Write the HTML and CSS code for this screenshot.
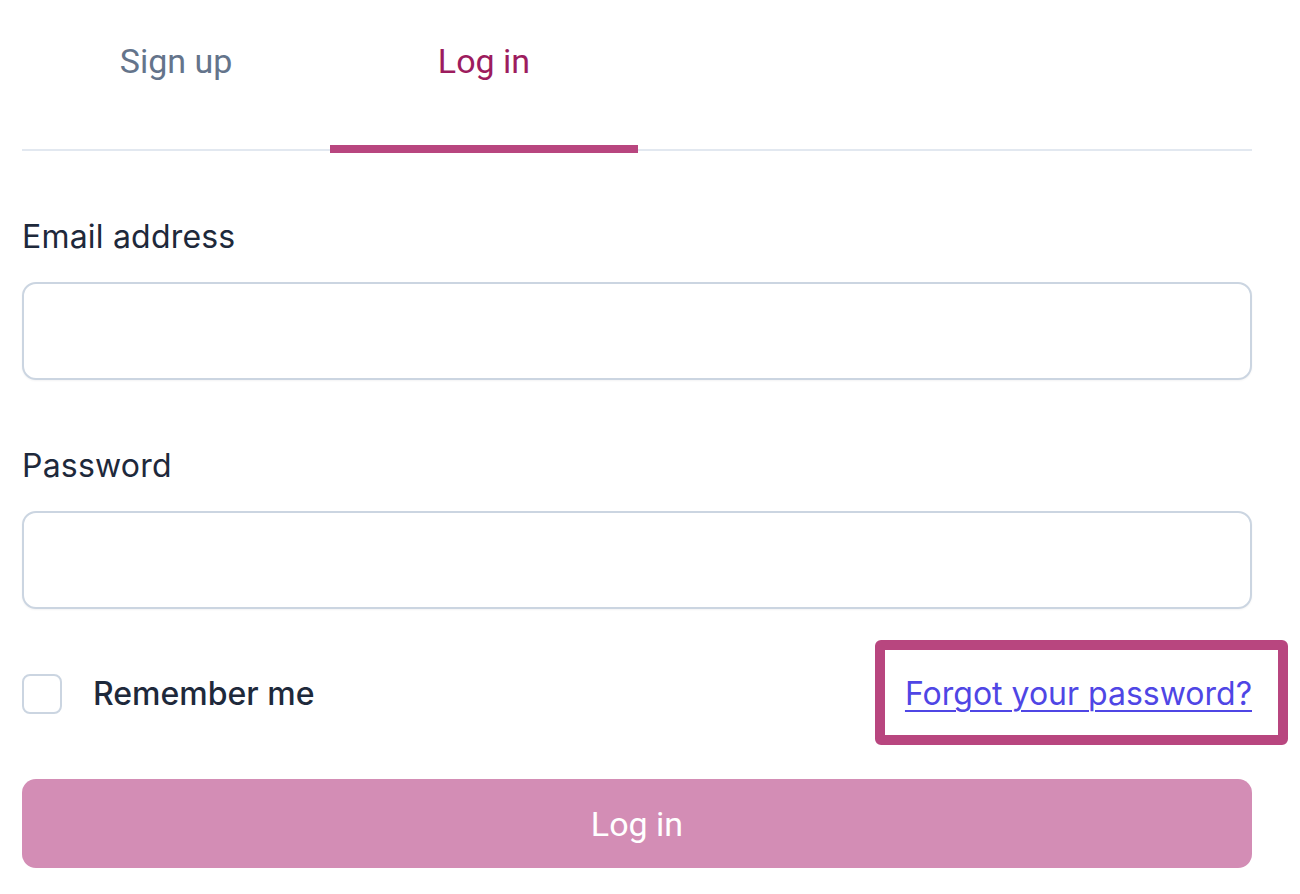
FILE: index.html
```html
<!DOCTYPE html>
<html lang="en">
<head>
<meta charset="utf-8">
<title>Log in</title>
<link rel="stylesheet" href="styles.css">
</head>
<body>
<div class="page">
  <nav class="tabs">
    <a class="tab" href="#">Sign up</a>
    <a class="tab tab-active" href="#">Log in</a>
  </nav>
  <form class="form">
    <div class="field">
      <label class="label" for="email">Email address</label>
      <input class="input" id="email" type="email">
    </div>
    <div class="field">
      <label class="label" for="password">Password</label>
      <input class="input" id="password" type="password">
    </div>
    <div class="row">
      <label class="remember">
        <span class="checkbox"></span>
        <span class="remember-text">Remember me</span>
      </label>
      <a class="forgot" href="#">Forgot your password?</a>
    </div>
    <button class="submit" type="button">Log in</button>
  </form>
</div>
</body>
</html>
```
FILE: styles.css
```css
* { box-sizing: border-box; }
html, body { margin: 0; padding: 0; background: #ffffff; }
body { font-family: Inter, "Noto Sans", sans-serif; }

.page {
  width: 1230px;
  margin-left: 22px;
}

.tabs {
  display: flex;
  border-bottom: 2px solid #e2e8f0;
}

.tab {
  width: 308px;
  display: block;
  text-align: center;
  font-family: Roboto, "Liberation Sans", sans-serif;
  font-size: 34px;
  line-height: 40px;
  padding-top: 41px;
  padding-bottom: 64px;
  color: #64748b;
  text-decoration: none;
  border-bottom: 8px solid transparent;
  margin-bottom: -4px;
}

.tab-active {
  color: #9d1c5e;
  border-bottom-color: #b8467f;
}

.form {
  display: flex;
  flex-direction: column;
  gap: 66px;
  padding-top: 66px;
}

.field {
  display: flex;
  flex-direction: column;
  gap: 25px;
}

.label {
  font-size: 32px;
  line-height: 40px;
  color: #1e293b;
  font-weight: 400;
  letter-spacing: 0.2px;
}

.input {
  width: 100%;
  height: 98px;
  border: 2px solid #cbd5e1;
  border-radius: 14px;
  background: #fff;
  box-shadow: 0 1px 2px rgba(15, 23, 42, 0.05);
  outline: none;
  font-size: 30px;
  padding: 0 20px;
}

.row {
  display: flex;
  justify-content: space-between;
  align-items: center;
  height: 40px;
  margin-top: -1px;
}

.remember {
  display: flex;
  align-items: center;
  gap: 31px;
}

.checkbox {
  width: 40px;
  height: 40px;
  border: 2px solid #cbd5e1;
  border-radius: 8px;
  background: #fff;
}

.remember-text {
  font-size: 32px;
  font-weight: 500;
  color: #1e293b;
  line-height: 40px;
}

.forgot {
  position: relative;
  font-size: 32px;
  line-height: 40px;
  color: #4f46e5;
  text-decoration: underline;
  text-decoration-thickness: 2px;
  text-underline-offset: 5px;
}

.forgot::after {
  content: "";
  position: absolute;
  left: -30px;
  right: -36px;
  top: -34px;
  bottom: -31px;
  border: 10px solid #b8467f;
  border-radius: 6px;
  pointer-events: none;
}

.submit {
  width: 100%;
  height: 89px;
  border: none;
  border-radius: 14px;
  background: #d38db5;
  color: #ffffff;
  font-family: Roboto, "Liberation Sans", sans-serif;
  font-size: 34px;
  margin-top: -1px;
}
```
